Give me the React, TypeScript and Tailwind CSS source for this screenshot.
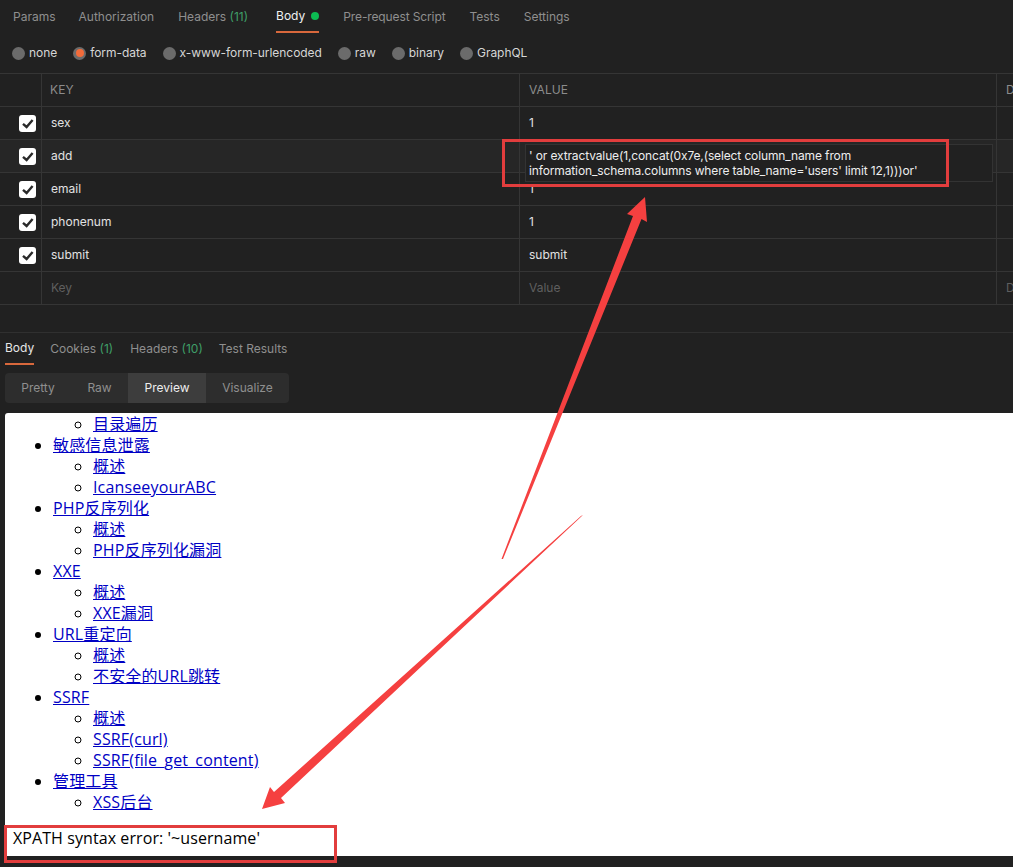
const uiFont = "font-['Inter','Noto_Sans',sans-serif]";

const requestTabs = [
    { label: "Params", gap: "mr-[23px]" },
    { label: "Authorization", gap: "mr-[24px]" },
];

const radios = ["none", "form-data", "x-www-form-urlencoded", "raw", "binary", "GraphQL"];

const rows = [
    { key: "sex", value: "1" },
    { key: "add", value: "" },
    { key: "email", value: "1" },
    { key: "phonenum", value: "1" },
    { key: "submit", value: "submit" },
];

const previewItems = [
    { text: "敏感信息泄露", children: ["概述", "IcanseeyourABC"] },
    { text: "PHP反序列化", children: ["概述", "PHP反序列化漏洞"] },
    { text: "XXE", children: ["概述", "XXE漏洞"] },
    { text: "URL重定向", children: ["概述", "不安全的URL跳转"] },
    { text: "SSRF", children: ["概述", "SSRF(curl)", "SSRF(file_get_content)"] },
    { text: "管理工具", children: ["XSS后台"] },
];

function Checkbox() {
    return (
        <div className="w-[17px] h-[17px] rounded-[3px] bg-white">
            <svg className="w-[17px] h-[17px]" viewBox="0 0 17 17" fill="none">
                <path d="M4 8.8L7.6 12L13.6 5" stroke="#2a2a2a" strokeWidth="2.4" />
            </svg>
        </div>
    );
}

function Link({ children }: { children: string }) {
    return <a className="text-[#0000c4] underline">{children}</a>;
}

export default function App() {
    return (
        <div className={`relative w-[1013px] h-[867px] overflow-hidden bg-[#212121] text-[12px] ${uiFont}`}>
            {/* Request tabs */}
            <div className="flex items-center h-[33px] pl-[13px] text-[#8f8f8f]">
                {requestTabs.map((t) => (
                    <span key={t.label} className={t.gap}>{t.label}</span>
                ))}
                <span className="mr-[28px]">
                    Headers <span className="text-[#3f9f68]">(11)</span>
                </span>
                <div className="relative h-full flex items-center gap-[6px] mr-[24px] text-[#f0f0f0] border-b-2 border-[#d8683c]">
                    Body
                    <span className="w-[8px] h-[8px] rounded-full bg-[#0cbb52]" />
                </div>
                <span className="mr-[24px] tracking-[-0.12px]">Pre-request Script</span>
                <span className="mr-[24px]">Tests</span>
                <span>Settings</span>
            </div>

            {/* Body type radios */}
            <div className="flex items-center h-[40px] pl-[12px] gap-[16px] text-[#d6d6d6] tracking-[-0.05px]">
                {radios.map((r) => (
                    <div key={r} className="flex items-center gap-[4px]">
                        <span className="w-[13px] h-[13px] rounded-full bg-[#6b6b6b] flex items-center justify-center">
                            {r === "form-data" && <span className="w-[8px] h-[8px] rounded-full bg-[#f26b3a]" />}
                        </span>
                        {r}
                    </div>
                ))}
            </div>

            {/* Params table */}
            <div className="border-t border-[#353535]">
                <div className="grid grid-cols-[42px_478px_477px_1fr] h-[33px] border-b border-[#353535] text-[#8c8c8c] tracking-[0.1px]">
                    <div className="border-r border-[#353535]" />
                    <div className="border-r border-[#353535] pl-[8px] flex items-center">KEY</div>
                    <div className="border-r border-[#353535] pl-[9px] flex items-center">VALUE</div>
                    <div className="pl-[9px] flex items-center whitespace-nowrap overflow-hidden">D</div>
                </div>
                {rows.map((row) => (
                    <div
                        key={row.key}
                        className={`grid grid-cols-[42px_478px_477px_1fr] h-[33px] border-b border-[#353535] text-[#e2e2e2] ${row.key === "add" ? "bg-[#262626]" : ""}`}
                    >
                        <div className="border-r border-[#353535] flex items-center pl-[19px]">
                            <Checkbox />
                        </div>
                        <div className="border-r border-[#353535] pl-[9px] flex items-center">{row.key}</div>
                        <div className="relative border-r border-[#353535] pl-[9px] flex items-center">
                            {row.value}
                            {row.key === "add" && (
                                <div className="absolute z-10 left-[5px] top-[4px] w-[468px] h-[38px] bg-[#212121] border border-[#333333] px-[3px] pt-[3px] leading-[15px] whitespace-nowrap text-[#eeeeee] tracking-[-0.13px]">
                                    ' or extractvalue(1,concat(0x7e,(select column_name from
                                    <br />
                                    information_schema.columns where table_name='users' limit 12,1)))or'
                                </div>
                            )}
                        </div>
                        <div />
                    </div>
                ))}
                <div className="grid grid-cols-[42px_478px_477px_1fr] h-[33px] border-b border-[#353535] text-[#5f5f5f]">
                    <div className="border-r border-[#353535]" />
                    <div className="border-r border-[#353535] pl-[9px] pb-[1px] flex items-center">Key</div>
                    <div className="border-r border-[#353535] pl-[9px] pb-[1px] flex items-center">Value</div>
                    <div className="pl-[9px] pb-[1px] flex items-center whitespace-nowrap overflow-hidden">D</div>
                </div>
            </div>

            <div className="h-[28px] border-b border-[#303030]" />

            {/* Response tabs */}
            <div className="flex h-[32px] pl-[5px] text-[#8f8f8f]">
                <div className="flex items-center h-full mr-[16px] text-[#e6e6e6] border-b-2 border-[#d8683c]">Body</div>
                <div className="flex items-center mr-[17px]">
                    Cookies&nbsp;<span className="text-[#3f9f68]">(1)</span>
                </div>
                <div className="flex items-center mr-[16px]">
                    Headers&nbsp;<span className="text-[#3f9f68]">(10)</span>
                </div>
                <div className="flex items-center">Test Results</div>
            </div>

            {/* Response format */}
            <div className="flex w-[284px] h-[30px] ml-[5px] mt-[8px] rounded-[4px] overflow-hidden bg-[#2d2d2d] text-[#8f8f8f]">
                <div className="w-[66px] flex items-center justify-center">Pretty</div>
                <div className="w-[57px] flex items-center justify-center">Raw</div>
                <div className="w-[78px] flex items-center justify-center bg-[#3d3d3d] text-[#eeeeee]">Preview</div>
                <div className="flex-1 flex items-center justify-center">Visualize</div>
            </div>

            {/* HTML preview */}
            <div className="ml-[5px] mt-[10px] h-[443px] pt-[1px] bg-white rounded-tl-[3px] overflow-hidden text-black text-[16px] leading-[21px] tracking-[0.15px] font-['Open_Sans','Noto_Sans_CJK_SC',sans-serif]">
                <ul className="list-disc pl-[48px]">
                    <ul className="list-[circle] pl-[40px]">
                        <li><Link>目录遍历</Link></li>
                    </ul>
                    {previewItems.map((item) => (
                        <li key={item.text}>
                            <Link>{item.text}</Link>
                            <ul className="list-[circle] pl-[40px]">
                                {item.children.map((c) => (
                                    <li key={c}><Link>{c}</Link></li>
                                ))}
                            </ul>
                        </li>
                    ))}
                </ul>
                <p className="pl-[8px] mt-[15px] tracking-[0.08px]">XPATH syntax error: '~username'</p>
            </div>

            {/* Annotations drawn on top of the screenshot */}
            <svg className="absolute inset-0 z-20 pointer-events-none" width="1013" height="867" viewBox="0 0 1013 867" fill="none">
                <rect x="503.5" y="140.5" width="444" height="45" stroke="#e23d3d" strokeWidth="3" />
                <rect x="5.5" y="826.5" width="330" height="35" stroke="#e23d3d" strokeWidth="3" />
                <path d="M501.5 559L633 216L627 214L645 197L647 222L641.5 219L503 559Z" fill="#f54040" />
                <path d="M583 515L281 798L285 803L262 809L270 787L274 792L581 516Z" fill="#f54040" />
            </svg>
        </div>
    );
}
